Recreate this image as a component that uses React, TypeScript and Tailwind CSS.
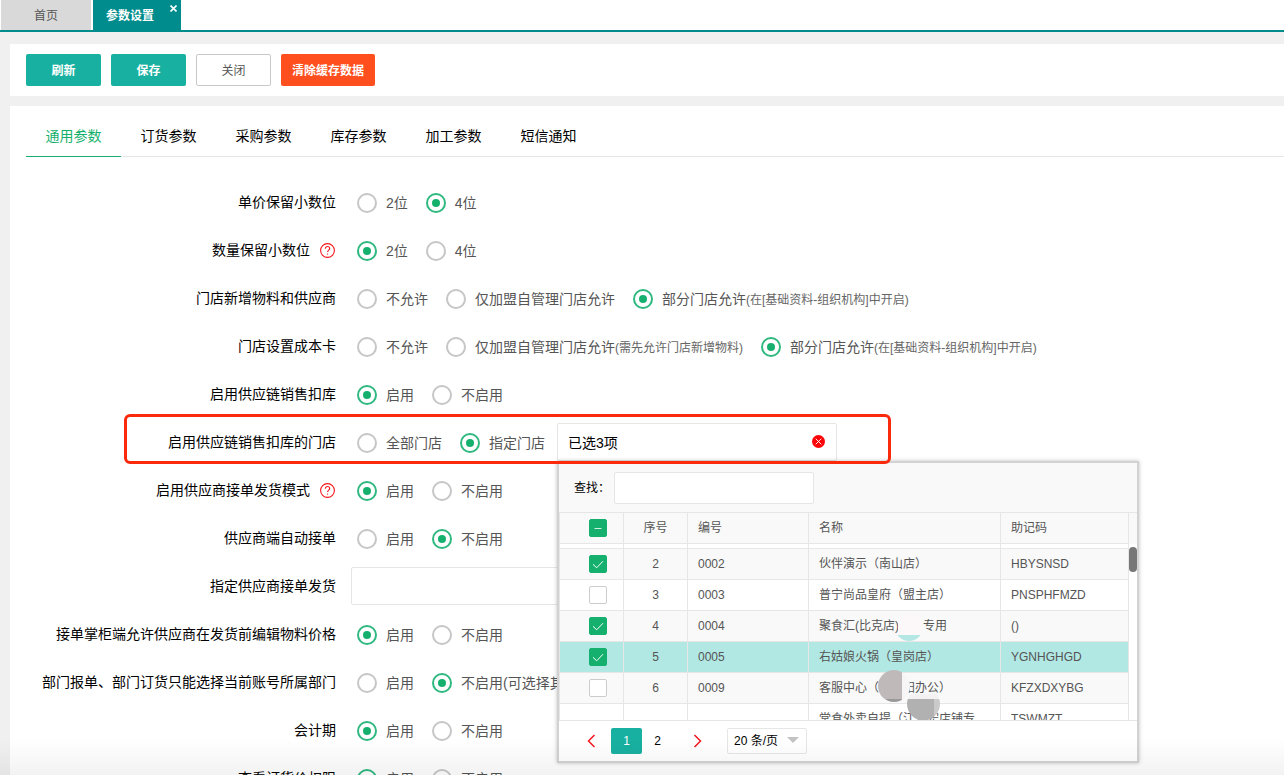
import type { ReactNode } from 'react';
import clsx from 'clsx';

type Option = {
  text: string;
  hint?: string;
  note?: string;
};

type RadioRow = {
  name: string;
  label: string;
  help?: boolean;
  options: Option[];
  checked: number;
};

type Shop = {
  no: string;
  code: string;
  name: string;
  memo: string;
  checked: boolean;
  active?: boolean;
};

const tabs = ['通用参数', '订货参数', '采购参数', '库存参数', '加工参数', '短信通知'];

const digits = [{ text: '2位' }, { text: '4位' }];
const onOff = [{ text: '启用' }, { text: '不启用' }];

const rowsBefore: RadioRow[] = [
  { name: 'price', label: '单价保留小数位', options: digits, checked: 1 },
  { name: 'amount', label: '数量保留小数位', help: true, options: digits, checked: 0 },
  {
    name: 'material',
    label: '门店新增物料和供应商',
    options: [
      { text: '不允许' },
      { text: '仅加盟自管理门店允许' },
      { text: '部分门店允许', hint: '(在[基础资料-组织机构]中开启)' },
    ],
    checked: 2,
  },
  {
    name: 'cost',
    label: '门店设置成本卡',
    options: [
      { text: '不允许' },
      { text: '仅加盟自管理门店允许', hint: '(需先允许门店新增物料)' },
      { text: '部分门店允许', hint: '(在[基础资料-组织机构]中开启)' },
    ],
    checked: 2,
  },
  { name: 'deduct', label: '启用供应链销售扣库', options: onOff, checked: 0 },
];

const shopRow: RadioRow = {
  name: 'deductShop',
  label: '启用供应链销售扣库的门店',
  options: [{ text: '全部门店' }, { text: '指定门店' }],
  checked: 1,
};

const rowsMiddle: RadioRow[] = [
  { name: 'delivery', label: '启用供应商接单发货模式', help: true, options: onOff, checked: 0 },
  { name: 'auto', label: '供应商端自动接单', options: onOff, checked: 1 },
];

const rowsAfter: RadioRow[] = [
  { name: 'edit', label: '接单掌柜端允许供应商在发货前编辑物料价格', options: onOff, checked: 0 },
  {
    name: 'dept',
    label: '部门报单、部门订货只能选择当前账号所属部门',
    options: [{ text: '启用' }, { text: '不启用', note: '(可选择其' }],
    checked: 1,
  },
  { name: 'period', label: '会计期', options: onOff, checked: 0 },
  { name: 'view', label: '查看订货价权限', options: onOff, checked: 0 },
];

const shops: Shop[] = [
  { no: '2', code: '0002', name: '伙伴演示（南山店）', memo: 'HBYSNSD', checked: true },
  { no: '3', code: '0003', name: '普宁尚品皇府（盟主店）', memo: 'PNSPHFMZD', checked: false },
  { no: '4', code: '0004', name: '聚食汇(比克店)　　专用', memo: '()', checked: true },
  { no: '5', code: '0005', name: '右姑娘火锅（皇岗店）', memo: 'YGNHGHGD', checked: true, active: true },
  { no: '6', code: '0009', name: '客服中心（　　阳办公）', memo: 'KFZXDXYBG', checked: false },
];

const HelpIcon = () => (
  <svg width="15" height="15" viewBox="0 0 15 15" fill="none" stroke="#f5161e" className="mr-px ml-2.5 shrink-0">
    <circle cx="7.5" cy="7.5" r="6.9" strokeWidth="1.1" />
    <path d="M5.300 5.700c0-1.400 1-2.200 2.200-2.200s2.200.8 2.200 2c0 1.600-2.100 1.800-2.100 3.600" strokeWidth="1.1" />
    <circle cx="7.600" cy="11.100" r=".4" fill="#f5161e" strokeWidth=".5" />
  </svg>
);

const Radios = ({ row }: { row: RadioRow }) => (
  <div role="radiogroup" aria-labelledby={`${row.name}-label`} className="ml-[21px] flex items-center gap-[18px] pt-0.5">
    {row.options.map((option, i) => (
      <label key={option.text} className="flex items-center whitespace-nowrap text-[#555]">
        <input
          type="radio"
          name={row.name}
          defaultChecked={row.checked === i}
          className="mr-[9px] flex h-5 w-5 shrink-0 appearance-none items-center justify-center rounded-full border-2 border-[#c6c6c6] bg-white before:h-2 before:w-2 before:rounded-full checked:border-[#2fb980] checked:before:bg-[#16b06e]"
        />
        <span>
          {option.text}
          {option.hint && <span className="text-xs text-[#666]">{option.hint}</span>}
          {option.note}
        </span>
      </label>
    ))}
  </div>
);

const FormRow = ({ row, children }: { row: RadioRow; children?: ReactNode }) => (
  <div className="relative flex h-12 items-center">
    <div id={`${row.name}-label`} className="flex w-[310px] shrink-0 items-center justify-end whitespace-nowrap text-black">
      {row.label}
      {row.help && <HelpIcon />}
    </div>
    <Radios row={row} />
    {children}
  </div>
);

const Check = ({ checked, partial, label }: { checked: boolean; partial?: boolean; label: string }) => (
  <label className="relative ml-[29px] block h-[18px] w-[18px]">
    <input
      type="checkbox"
      aria-label={label}
      defaultChecked={checked}
      className="block h-[18px] w-[18px] appearance-none rounded-xs border border-[#ccc] bg-white checked:border-[#16b06e] checked:bg-[#16b06e]"
    />
    {checked && (
      <svg viewBox="0 0 18 18" fill="none" stroke="#fff" className="pointer-events-none absolute inset-0">
        {partial ? <path d="M5.500 9.500h7" opacity=".8" /> : <path d="M4 9.300l3.700 3.500 6.300-6.600" />}
      </svg>
    )}
  </label>
);

const Columns = () => (
  <colgroup>
    <col className="w-16" />
    <col className="w-16" />
    <col className="w-[121px]" />
    <col className="w-48" />
    <col className="w-32" />
  </colgroup>
);

const cell = 'border-r border-b border-[#e6e6e6] p-0 font-normal';

const ShopPanel = () => (
  <div className="absolute top-full left-0 z-10 w-[582px] border-2 border-[#d2d2d2] bg-white text-xs text-[#555] shadow-[0_0_4px_rgba(0,0,0,0.25)]">
    <div className="flex h-[49px] items-center bg-[#f9f9f9] pl-[15px]">
      <label htmlFor="shop-search" className="w-10 text-black">
        查找：
      </label>
      <input id="shop-search" type="text" className="h-8 w-[200px] rounded-xs border border-[#e6e6e6] bg-white px-2" />
    </div>

    <div className="border-t border-[#e6e6e6] bg-[#f9f9f9]">
      <table className="w-[569px] table-fixed border-separate border-spacing-0 border-l border-[#e6e6e6] text-left">
        <Columns />
        <thead>
          <tr className="h-[31px]">
            <th className={cell}>
              <Check checked partial label="全选" />
            </th>
            <th className={clsx(cell, 'text-center')}>序号</th>
            <th className={clsx(cell, 'pl-2.5')}>编号</th>
            <th className={clsx(cell, 'pl-2.5')}>名称</th>
            <th className={clsx(cell, 'pl-2.5')}>助记码</th>
          </tr>
        </thead>
      </table>
    </div>

    <div className="relative h-44 overflow-hidden">
      <table className="w-[569px] table-fixed border-separate border-spacing-0 border-l border-[#e6e6e6]">
        <Columns />
        <tbody>
          <tr className="h-[5px]">
            {[0, 1, 2, 3, 4].map((i) => (
              <td key={i} className={cell} />
            ))}
          </tr>
          {shops.map((shop, i) => (
            <tr
              key={shop.no}
              className={clsx('h-[31px]', shop.active ? 'bg-[#b2e8e4]' : i % 2 === 0 ? 'bg-[#f9f9f9]' : 'bg-white')}
            >
              <td className={cell}>
                <Check checked={shop.checked} label={shop.name} />
              </td>
              <td className={clsx(cell, 'text-center')}>{shop.no}</td>
              <td className={clsx(cell, 'pl-2.5')}>{shop.code}</td>
              <td className={clsx(cell, 'pl-2.5 whitespace-nowrap')}>{shop.name}</td>
              <td className={clsx(cell, 'pl-2.5')}>{shop.memo}</td>
            </tr>
          ))}
          <tr className="h-[31px]">
            <td className={cell} />
            <td className={cell} />
            <td className={cell} />
            <td className={clsx(cell, 'pl-2.5 whitespace-nowrap')}>堂食外卖自提（江汉宏店铺专</td>
            <td className={clsx(cell, 'pl-2.5')}>TSWMZT</td>
          </tr>
        </tbody>
      </table>

      {/* smudges over the shop names */}
      <svg width="64" height="108" viewBox="0 0 64 108" className="pointer-events-none absolute top-[68px] left-[319px]">
        <defs>
          <clipPath id="smudge-a">
            <circle cx="31" cy="15" r="14" />
          </clipPath>
          <clipPath id="smudge-b">
            <circle cx="16" cy="74" r="16" />
          </clipPath>
          <clipPath id="smudge-c">
            <circle cx="45.500" cy="92" r="16.500" />
          </clipPath>
        </defs>
        <g clipPath="url(#smudge-a)">
          <rect x="20" y="0" width="26" height="23" fill="#fcf8f9" />
          <rect x="16" y="23" width="30" height="8" fill="#b5e8e4" />
        </g>
        <g clipPath="url(#smudge-b)">
          <rect x="0" y="57" width="24" height="30" fill="#bfb9ba" />
          <rect x="24" y="57" width="9" height="30" fill="#f7f5f5" />
          <rect x="0" y="87" width="24" height="5" fill="#999" />
        </g>
        <g clipPath="url(#smudge-c)">
          <rect x="29" y="82" width="34" height="5" fill="#f3f1f1" />
          <rect x="29" y="87" width="27" height="22" fill="#b1b1b1" />
          <rect x="56" y="87" width="8" height="22" fill="#cacaca" />
        </g>
      </svg>
      <div className="absolute top-[3px] right-0 h-[25px] w-2 rounded-full bg-[#777]" />
    </div>

    <div className="flex h-[41px] items-center border-t border-[#e6e6e6] bg-white pl-7 text-black">
      <button type="button" aria-label="上一页" className="flex h-6 w-6 items-center">
        <svg width="9" height="14" viewBox="0 0 9 14" fill="none" stroke="#f5161e" strokeWidth="1.500">
          <path d="M7.500 1L1.500 7l6 6" />
        </svg>
      </button>
      <button type="button" className="h-[26px] w-[31px] rounded-xs bg-[#18b0a0] text-white">
        1
      </button>
      <button type="button" className="h-[26px] w-[31px]">
        2
      </button>
      <button type="button" aria-label="下一页" className="flex h-6 w-[54px] items-center pl-5">
        <svg width="9" height="14" viewBox="0 0 9 14" fill="none" stroke="#f5161e" strokeWidth="1.500">
          <path d="M1.500 1l6 6-6 6" />
        </svg>
      </button>
      <div className="relative">
        <select aria-label="每页条数" className="block h-[26px] w-20 appearance-none rounded-xs border border-[#e6e6e6] bg-white pl-1.5">
          <option>20 条/页</option>
        </select>
        <svg width="12" height="6" viewBox="0 0 12 6" fill="#c2c2c2" className="pointer-events-none absolute top-[9px] right-2">
          <path d="M0 0h12L6 6z" />
        </svg>
      </div>
    </div>
  </div>
);

const App = () => {
  return (
    <div className="relative flex h-screen flex-col overflow-hidden bg-[#f0f0f0] font-['Liberation_Sans','Noto_Sans_CJK_SC',sans-serif] text-sm leading-5">
      <nav className="flex h-8 shrink-0 gap-0.5 border-b-2 border-[#008c8c] bg-white pl-px text-xs">
        <button type="button" className="w-[90px] bg-[#d9d9d9] pt-0.5 text-[#555]">
          首页
        </button>
        <div className="relative flex bg-[#008c8c] text-white">
          <button type="button" className="w-[88px] pt-0.5 pr-4 pl-[13px] text-left font-bold">
            参数设置
          </button>
          <button type="button" aria-label="关闭标签" className="absolute top-[5px] right-1">
            <svg width="7" height="7" viewBox="0 0 7 7" stroke="#fff" strokeWidth="1.600">
              <path d="M.5.5l6 6M6.500.5l-6 6" />
            </svg>
          </button>
        </div>
      </nav>

      <div className="mt-3 ml-2.5 flex h-[52px] shrink-0 items-center gap-2.5 bg-white pl-4 text-xs">
        <button type="button" className="h-8 w-[75px] rounded-xs bg-[#18b0a0] pt-0.5 font-bold text-white">
          刷新
        </button>
        <button type="button" className="h-8 w-[75px] rounded-xs bg-[#18b0a0] pt-0.5 font-bold text-white">
          保存
        </button>
        <button type="button" className="h-8 w-[75px] rounded-xs border border-[#c9c9c9] bg-white pt-0.5 text-[#555]">
          关闭
        </button>
        <button type="button" className="h-8 w-[94px] rounded-xs bg-[#ff4f1f] pt-0.5 font-bold text-white">
          清除缓存数据
        </button>
      </div>

      <main className="mt-2.5 ml-2.5 grow bg-white pt-2.5 pl-4">
        <div role="tablist" className="flex h-[41px] border-b border-[#e6e6e6]">
          {tabs.map((tab, i) => (
            <button
              key={tab}
              type="button"
              role="tab"
              aria-selected={i === 0}
              className={clsx('-mb-px w-[95px] border-b', i === 0 ? 'border-[#16b06e] text-[#16b06e]' : 'border-transparent text-black')}
            >
              {tab}
            </button>
          ))}
        </div>

        <form className="pt-[21px]">
          {rowsBefore.map((row) => (
            <FormRow key={row.name} row={row} />
          ))}

          <FormRow row={shopRow}>
            <div className="relative ml-3">
              <input
                type="text"
                aria-label="指定门店"
                defaultValue="已选3项"
                className="block h-[38px] w-[280px] rounded-xs border border-[#e6e6e6] bg-white px-2.5 text-black"
              />
              <button type="button" aria-label="清空" className="absolute top-3 right-3">
                <svg width="13" height="13" viewBox="0 0 13 13">
                  <circle cx="6.500" cy="6.500" r="6.500" fill="#fb0307" />
                  <path d="M3.700 3.700l5.600 5.600M9.300 3.700L3.700 9.300" stroke="#fff" strokeWidth=".9" />
                </svg>
              </button>
              <ShopPanel />
            </div>
            <div className="pointer-events-none absolute -top-1 left-[98px] z-20 h-[50px] w-[767px] rounded-md border-3 border-[#fb2a0c]" />
          </FormRow>

          {rowsMiddle.map((row) => (
            <FormRow key={row.name} row={row} />
          ))}

          <div className="flex h-12 items-center">
            <label htmlFor="supplier" className="w-[310px] shrink-0 text-right text-black">
              指定供应商接单发货
            </label>
            <input id="supplier" type="text" className="ml-[15px] h-[38px] w-[280px] rounded-xs border border-[#e6e6e6] px-2.5" />
          </div>

          {rowsAfter.map((row) => (
            <FormRow key={row.name} row={row} />
          ))}
        </form>
      </main>

      <div className="pointer-events-none absolute inset-x-0 bottom-0 z-30 h-9 bg-linear-to-t from-black/5 to-transparent" />
    </div>
  );
};

export default App;
